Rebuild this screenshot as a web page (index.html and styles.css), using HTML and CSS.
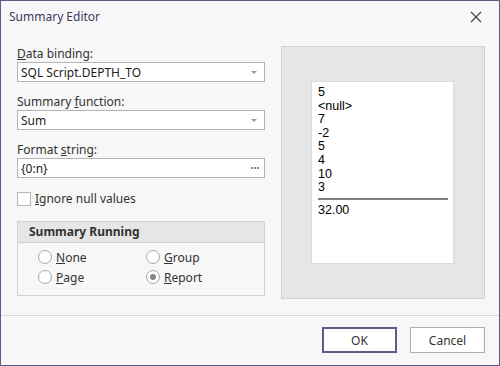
FILE: index.html
```html
<!DOCTYPE html>
<html lang="en">
<head>
    <meta charset="UTF-8">
    <title>Summary Editor</title>
    <link rel="stylesheet" href="styles.css">
</head>
<body>
    <div class="window">
        <div class="titlebar">
            <span class="title">Summary Editor</span>
            <svg class="close" width="12" height="12" viewBox="0 0 12 12">
                <path d="M1 1 L11 11 M11 1 L1 11" stroke="#444" stroke-width="1.2" fill="none"/>
            </svg>
        </div>

        <div class="content">
            <div class="left">
                <div class="field">
                    <label><u>D</u>ata binding:</label>
                    <div class="input">
                        <span>SQL Script.DEPTH_TO</span>
                        <span class="arrow"></span>
                    </div>
                </div>
                <div class="field">
                    <label>Summary <u>f</u>unction:</label>
                    <div class="input">
                        <span>Sum</span>
                        <span class="arrow"></span>
                    </div>
                </div>
                <div class="field">
                    <label>Format <u>s</u>tring:</label>
                    <div class="input">
                        <span>{0:n}</span>
                        <span class="dots"><i></i><i></i><i></i></span>
                    </div>
                </div>

                <div class="check-row">
                    <span class="checkbox"></span>
                    <span><u>I</u>gnore null values</span>
                </div>

                <div class="group">
                    <div class="group-head">Summary Running</div>
                    <div class="radios">
                        <div class="radio"><span class="circle"></span><span><u>N</u>one</span></div>
                        <div class="radio"><span class="circle"></span><span><u>G</u>roup</span></div>
                        <div class="radio"><span class="circle"></span><span><u>P</u>age</span></div>
                        <div class="radio"><span class="circle checked"></span><span><u>R</u>eport</span></div>
                    </div>
                </div>
            </div>

            <div class="preview">
                <div class="page">
                    <div>5</div>
                    <div>&lt;null&gt;</div>
                    <div>7</div>
                    <div>-2</div>
                    <div>5</div>
                    <div>4</div>
                    <div>10</div>
                    <div>3</div>
                    <div class="total-line"></div>
                    <div>32.00</div>
                </div>
            </div>
        </div>

        <div class="footer">
            <button class="btn default">OK</button>
            <button class="btn">Cancel</button>
        </div>
    </div>
</body>
</html>
```

FILE: styles.css
```css
body {
    margin: 0;
    padding: 0;
    font-family: "Segoe UI", "Noto Sans", sans-serif;
    font-size: 12px;
    color: #333;
}

.window {
    box-sizing: border-box;
    width: 500px;
    height: 366px;
    border: 1px solid #5d5a8c;
    background-color: #f7f7f7;
    display: flex;
    flex-direction: column;
}

.titlebar {
    height: 31px;
    display: flex;
    align-items: center;
    justify-content: space-between;
    padding: 0 17px 0 8px;
}

.title {
    color: #3b3b5a;
}

.content {
    display: flex;
    gap: 16px;
    padding: 14px 14px 0 16px;
    height: 253px;
}

.left {
    width: 248px;
}

.field {
    margin-bottom: 12px;
}

.field label {
    display: block;
    line-height: 16px;
    margin-bottom: 0;
}

.input {
    box-sizing: border-box;
    height: 20px;
    background-color: #fff;
    border: 1px solid #b4b4b4;
    display: flex;
    align-items: center;
    justify-content: space-between;
    padding: 0 5px 0 3px;
    color: #222;
}

.arrow {
    width: 0;
    height: 0;
    border-left: 3px solid transparent;
    border-right: 3px solid transparent;
    border-top: 3px solid #999;
    margin: 1px 2px 0 0;
}

.dots {
    display: flex;
    gap: 1px;
}

.dots i {
    width: 2px;
    height: 2px;
    background-color: #8c8c8c;
}

.check-row {
    display: flex;
    align-items: center;
    gap: 4px;
    margin-top: 4px;
}

.checkbox {
    box-sizing: border-box;
    width: 14px;
    height: 14px;
    background-color: #fff;
    border: 1px solid #b4b4b4;
}

.group {
    margin-top: 14px;
    border: 1px solid #d2d2d2;
    height: 75px;
    box-sizing: border-box;
}

.group-head {
    height: 20px;
    line-height: 20px;
    background-color: #e6e6e6;
    border-bottom: 1px solid #d2d2d2;
    font-weight: bold;
    padding-left: 11px;
}

.radios {
    display: grid;
    grid-template-columns: 108px 108px;
    row-gap: 6px;
    padding: 7px 0 0 20px;
}

.radio {
    display: flex;
    align-items: center;
    gap: 4px;
    height: 14px;
}

.circle {
    box-sizing: border-box;
    width: 14px;
    height: 14px;
    border-radius: 50%;
    border: 1px solid #a8a8a8;
    background-color: #fff;
    display: flex;
    align-items: center;
    justify-content: center;
}

.circle.checked::after {
    content: "";
    width: 6px;
    height: 6px;
    border-radius: 50%;
    background-color: #858585;
}

.preview {
    box-sizing: border-box;
    width: 204px;
    height: 253px;
    background-color: #e6e6e6;
    border: 1px solid #d2d2d2;
    padding: 34px 0 0 29px;
}

.page {
    box-sizing: border-box;
    width: 143px;
    height: 183px;
    background-color: #fff;
    border: 1px solid #dadada;
    padding: 4px 5px 0 6px;
    font-family: "Liberation Sans", Arial, sans-serif;
    font-size: 12.5px;
    line-height: 13.6px;
    color: #000;
}

.total-line {
    height: 2px;
    background-color: #808080;
    margin: 3px 0 4px;
}

.footer {
    border-top: 1px solid #d6d6d6;
    margin-top: 16px;
    display: flex;
    justify-content: flex-end;
    gap: 13px;
    padding: 11px 14px 0 0;
}

.btn {
    box-sizing: border-box;
    width: 75px;
    height: 26px;
    background-color: #fff;
    border: 1px solid #acacac;
    font-family: inherit;
    font-size: 12px;
    color: #333;
    padding: 0;
}

.btn.default {
    border: 2px solid #5d5a8c;
}
```
